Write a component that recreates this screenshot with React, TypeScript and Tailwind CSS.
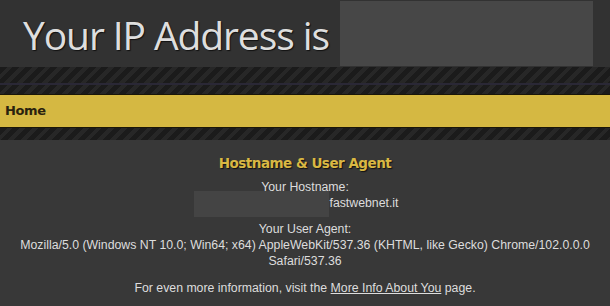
import React from "react";

const stripes =
  "bg-[repeating-linear-gradient(135deg,#1b1b1b_0px,#1b1b1b_5px,#272727_5px,#272727_9px)]";

export default function App() {
  return (
    <div className="w-[610px] h-[306px] overflow-hidden bg-[#383838] font-['Liberation_Sans',sans-serif]">
      <div className="h-[67px] bg-[#323232] flex items-stretch">
        <div className="pl-[23px] pt-[10px] text-[39px] leading-[50px] tracking-[-1.1px] text-[#dedede] font-['Open_Sans',sans-serif] [text-shadow:1px_1px_1px_#111] whitespace-nowrap">
          Your IP Address is
        </div>
        <div className="ml-auto mr-[17px] mt-[1px] mb-[1px] w-[253px] bg-[#474747]" />
      </div>
      <div className={`h-[16px] ${stripes}`} />
      <div className="h-[2px] bg-[#2a2836]" />
      <div className={`h-[9px] ${stripes}`} />
      <div className="h-[34px] bg-[#d5b842] border-y border-[#1a1608] flex items-center pl-[5px]">
        <span className="text-[13px] font-bold text-[#2a220e] font-['DejaVu_Sans',sans-serif] tracking-[-0.4px]">
          Home
        </span>
      </div>
      <div className={`h-[12px] ${stripes}`} />
      <div className="flex flex-col items-center text-[#dddddd] text-[12.3px] leading-[16px] pt-[14px]">
        <div className="text-[13.5px] font-bold text-[#d9b843] font-['DejaVu_Sans',sans-serif] tracking-[-0.5px] [text-shadow:1px_1px_1px_#111] leading-[18px]">
          Hostname &amp; User Agent
        </div>
        <div className="mt-[7px]">Your Hostname:</div>
        <div className="relative flex h-[16px]">
          <span className="block w-[118px]" />
          <span>fastwebnet.it</span>
          <span className="absolute left-[-17px] top-[-4px] w-[135px] h-[26px] bg-[#444444]" />
        </div>
        <div className="mt-[10px]">Your User Agent:</div>
        <div className="text-center">
          Mozilla/5.0 (Windows NT 10.0; Win64; x64) AppleWebKit/537.36 (KHTML, like Gecko) Chrome/102.0.0.0
          <br />
          Safari/537.36
        </div>
        <div className="mt-[11px]">
          For even more information, visit the <span className="underline">More Info About You</span> page.
        </div>
      </div>
    </div>
  );
}
